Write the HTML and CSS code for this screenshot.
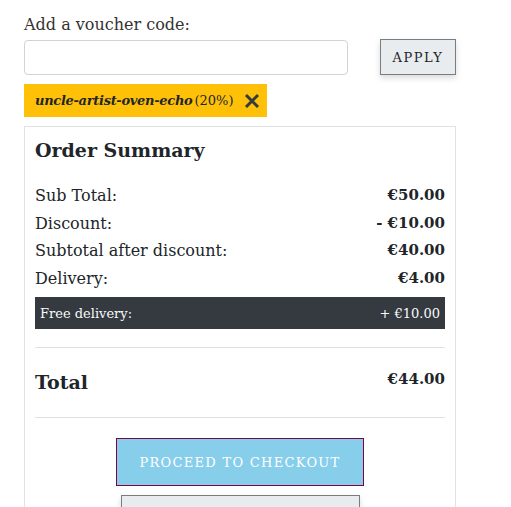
FILE: index.html
```html
<!DOCTYPE html>
<html lang="en">
<head>
<meta charset="utf-8">
<title>Basket</title>
<link rel="stylesheet" href="styles.css">
</head>
<body>
<div class="page">
  <form class="voucher">
    <label class="voucher-label" for="code">Add a voucher code:</label>
    <div class="voucher-row">
      <input id="code" class="voucher-input" type="text">
      <button type="button" class="btn-apply">APPLY</button>
    </div>
    <div class="tag">
      <span class="tag-code">uncle-artist-oven-echo</span><span class="tag-pct">(20%)</span>
      <svg class="tag-x" width="16" height="16" viewBox="0 0 16 16"><path d="M2 2 L14 14 M14 2 L2 14" stroke="#343a40" stroke-width="3" fill="none"/></svg>
    </div>
  </form>

  <section class="card">
    <h2 class="card-title">Order Summary</h2>
    <div class="rows">
      <div class="row"><span>Sub Total:</span><strong>€50.00</strong></div>
      <div class="row"><span>Discount:</span><strong>- €10.00</strong></div>
      <div class="row"><span>Subtotal after discount:</span><strong>€40.00</strong></div>
      <div class="row"><span>Delivery:</span><strong>€4.00</strong></div>
    </div>
    <div class="free-bar"><span>Free delivery:</span><span>+ €10.00</span></div>
    <hr class="sep">
    <div class="total-row"><span class="total-label">Total</span><strong class="total-value">€44.00</strong></div>
    <hr class="sep sep-bottom">
    <div class="actions">
      <button type="button" class="btn-checkout">PROCEED TO CHECKOUT</button>
      <button type="button" class="btn-secondary">CONTINUE SHOPPING</button>
    </div>
  </section>
</div>
</body>
</html>
```

FILE: styles.css
```css
html, body {
  margin: 0;
  padding: 0;
  background: #fff;
}
body {
  font-family: "DejaVu Serif", "Liberation Serif", serif;
  color: #212529;
  overflow: hidden;
}
.page {
  padding: 13px 55px 0 24px;
  width: 432px;
}
.voucher {
  display: flex;
  flex-direction: column;
}
.voucher-label {
  font-size: 16px;
  line-height: 24px;
  color: #333;
  margin-bottom: 3px;
}
.voucher-row {
  display: flex;
  align-items: flex-start;
  gap: 32px;
}
.voucher-input {
  box-sizing: border-box;
  width: 324px;
  height: 35px;
  margin-top: 0;
  border: 1px solid #ced4da;
  border-radius: 4px;
  padding: 0 10px;
  font: inherit;
}
.btn-apply {
  box-sizing: border-box;
  width: 76px;
  height: 36px;
  margin-top: -1px;
  background: #e9ecef;
  border: 1px solid #7a7d80;
  box-shadow: 0 3px 6px rgba(0,0,0,0.15);
  font-family: inherit;
  font-size: 13px;
  letter-spacing: 1.5px;
  color: #212529;
  padding: 0;
}
.tag {
  align-self: flex-start;
  margin-top: 9px;
  height: 33px;
  box-sizing: border-box;
  background: #ffc107;
  display: flex;
  align-items: center;
  padding: 0 7px 0 11px;
  font-size: 13px;
  color: #212529;
}
.tag-code {
  font-style: italic;
  font-weight: bold;
  letter-spacing: -0.3px;
}
.tag-pct {
  margin-left: 2px;
}
.tag-x {
  margin-left: 11px;
}
.card {
  margin-top: 9px;
  border: 1px solid #dee2e6;
  padding: 7px 10px 0 10px;
  box-sizing: border-box;
  width: 432px;
}
.card-title {
  margin: 0 0 16px 0;
  font-size: 19px;
  line-height: 32px;
  font-weight: bold;
}
.rows {
  display: flex;
  flex-direction: column;
}
.row {
  display: flex;
  justify-content: space-between;
  font-size: 16px;
  line-height: 27.6px;
}
.row strong {
  font-size: 15px;
}
.free-bar {
  margin-top: 5px;
  height: 32px;
  background: #343a40;
  color: #f8f9fa;
  display: flex;
  justify-content: space-between;
  align-items: center;
  padding: 0 5px;
  font-size: 13px;
}
.sep {
  border: 0;
  border-top: 1px solid #dee2e6;
  margin: 18px 0 0 0;
}
.total-row {
  display: flex;
  justify-content: space-between;
  align-items: flex-start;
  padding: 20px 0 21px;
}
.total-label {
  font-size: 19px;
  font-weight: bold;
  line-height: 28px;
}
.total-value {
  font-size: 15px;
  line-height: 22px;
}
.sep-bottom {
  margin: 0;
}
.actions {
  display: flex;
  flex-direction: column;
  align-items: center;
  gap: 9px;
  padding-top: 20px;
}
.btn-checkout {
  box-sizing: border-box;
  width: 248px;
  height: 48px;
  background: #87ceeb;
  border: 1px solid #80004d;
  color: #fff;
  font-family: inherit;
  font-size: 13px;
  letter-spacing: 1.3px;
}
.btn-secondary {
  box-sizing: border-box;
  width: 239px;
  padding: 22px 0 14px;
  background: #e9ecef;
  border: 1px solid #7a7d80;
  box-shadow: 0 3px 6px rgba(0,0,0,0.15);
  font-family: inherit;
  font-size: 14px;
  line-height: 18px;
  letter-spacing: 1.5px;
  color: #212529;
}
```
